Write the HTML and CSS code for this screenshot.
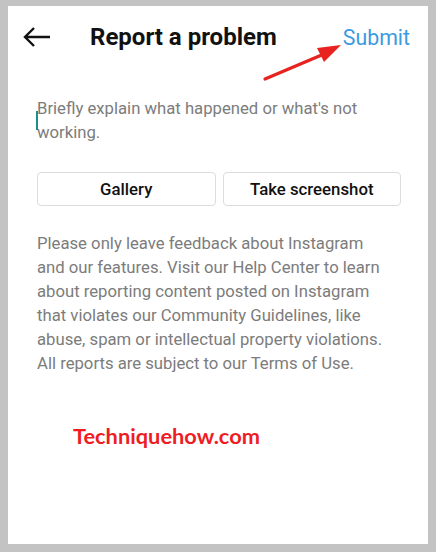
FILE: index.html
```html
<!DOCTYPE html>
<html lang="en">

<head>
    <meta charset="UTF-8">
    <meta name="viewport" content="width=device-width, initial-scale=1.0">
    <title>Report a problem</title>
    <link rel="stylesheet" href="styles.css">
</head>

<body>
    <div class="screen">
        <div class="header">
            <svg class="back" width="28" height="20" viewBox="0 0 28 20">
                <path d="M2 10 H27 M11 1 L2 10 L11 19" fill="none" stroke="#111" stroke-width="2.4" />
            </svg>
            <h1 class="title">Report a problem</h1>
            <span class="submit">Submit</span>
        </div>

        <!-- red annotation arrow -->
        <svg class="pointer" width="90" height="50" viewBox="0 0 90 50">
            <line x1="3" y1="45" x2="62" y2="20" stroke="#e8231f" stroke-width="3.2" stroke-linecap="round" />
            <polygon points="79,11 55,14 62,28" fill="#e8231f" />
        </svg>

        <div class="input">
            <span class="cursor"></span>
            <p class="placeholder">Briefly explain what happened or what's not working.</p>
        </div>

        <div class="buttons">
            <button class="btn">Gallery</button>
            <button class="btn">Take screenshot</button>
        </div>

        <p class="info">Please only leave feedback about Instagram and our features. Visit our Help Center to learn about reporting content posted on Instagram that violates our Community Guidelines, like abuse, spam or intellectual property violations. All reports are subject to our Terms of Use.</p>

        <div class="watermark">Techniquehow.com</div>
    </div>
</body>

</html>
```

FILE: styles.css
```css
body {
    margin: 0;
    padding: 6px 8px 8px 8px;
    background-color: #c3c3c3;
    font-family: Roboto, "Liberation Sans", sans-serif;
}

.screen {
    position: relative;
    height: 538px;
    background-color: #fff;
}

.header {
    display: flex;
    align-items: center;
    height: 62px;
    padding: 0 18px 0 15px;
}

.back {
    display: block;
}

.title {
    margin: 0 0 0 39px;
    font-size: 24px;
    font-weight: bold;
    color: #111;
}

.submit {
    margin-left: auto;
    font-size: 21.3px;
    color: #3b9ae0;
}

.pointer {
    position: absolute;
    left: 254px;
    top: 28px;
}

.input {
    position: relative;
    padding: 29px 33px 0 29px;
}

.cursor {
    position: absolute;
    left: 28px;
    top: 43px;
    width: 2px;
    height: 19px;
    background-color: #1b8f86;
}

.placeholder {
    margin: 0;
    font-size: 16.7px;
    line-height: 24px;
    color: #7c7c7c;
}

.buttons {
    display: flex;
    gap: 7px;
    margin: 27px 27px 0 29px;
}

.btn {
    flex: 1;
    height: 34px;
    background-color: #fff;
    border: 1px solid #dcdcdc;
    border-radius: 4px;
    font-family: Roboto, "Liberation Sans", sans-serif;
    font-size: 16.8px;
    font-weight: 500;
    color: #111;
}

.info {
    margin: 26px 33px 0 29px;
    font-size: 16.7px;
    line-height: 24px;
    color: #7c7c7c;
}

.watermark {
    margin: 46px 0 0 65px;
    font-family: Lato, sans-serif;
    font-size: 21.8px;
    font-weight: bold;
    color: #ee1d24;
}
```
